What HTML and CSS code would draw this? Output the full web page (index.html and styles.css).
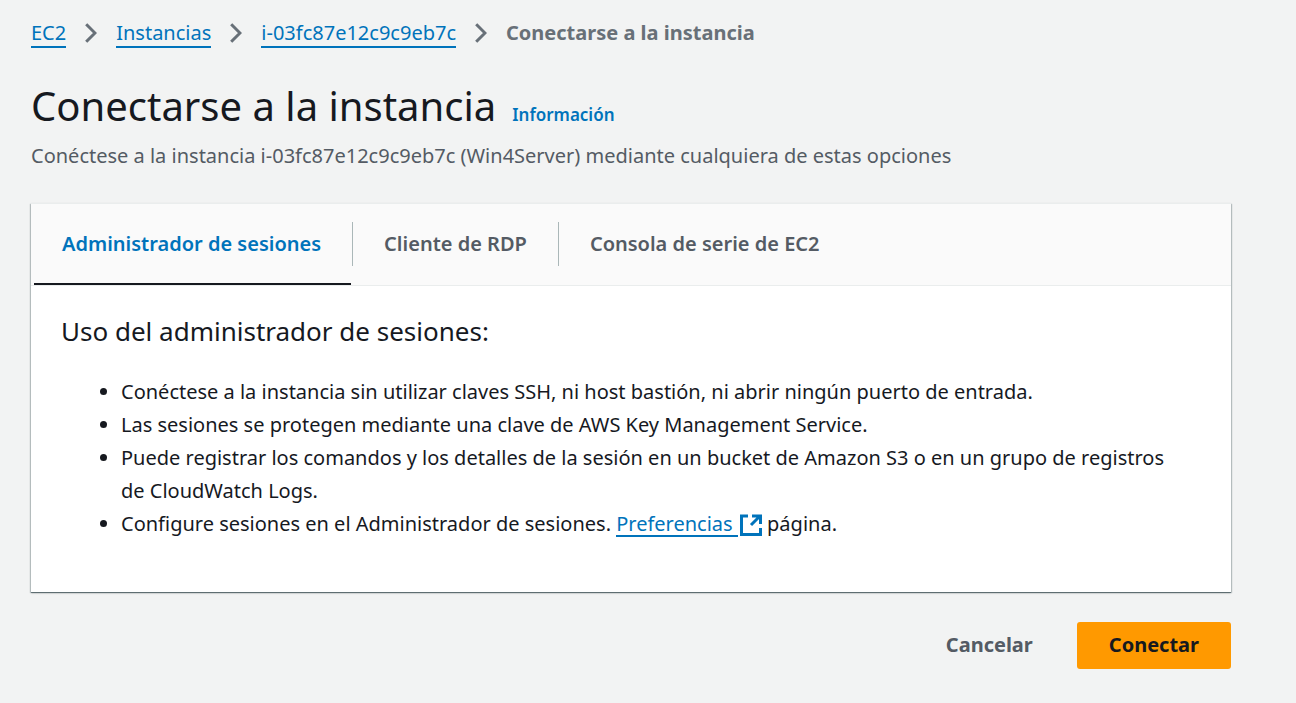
FILE: index.html
```html
<!DOCTYPE html>
<html lang="es">
<head>
<meta charset="utf-8">
<meta name="viewport" content="width=device-width, initial-scale=1">
<title>Conectarse a la instancia | EC2</title>
<link rel="stylesheet" href="styles.css">
</head>
<body>
<main class="page">
  <nav class="breadcrumb" aria-label="Ruta de navegación">
    <a class="link" href="#ec2">EC2</a>
    <svg class="chevron" viewBox="0 0 12 20" aria-hidden="true"><path d="M1.2 1.2 10 10l-8.800 8.800"/></svg>
    <a class="link" href="#instancias">Instancias</a>
    <svg class="chevron" viewBox="0 0 12 20" aria-hidden="true"><path d="M1.2 1.2 10 10l-8.800 8.800"/></svg>
    <a class="link" href="#instancia">i-03fc87e12c9c9eb7c</a>
    <svg class="chevron" viewBox="0 0 12 20" aria-hidden="true"><path d="M1.2 1.2 10 10l-8.800 8.800"/></svg>
    <span class="current" aria-current="page">Conectarse a la instancia</span>
  </nav>

  <header class="header">
    <div class="heading">
      <h1 class="title">Conectarse a la instancia</h1>
      <a class="info" href="#info">Información</a>
    </div>
    <p class="description">Conéctese a la instancia i-03fc87e12c9c9eb7c (Win4Server) mediante cualquiera de estas opciones</p>
  </header>

  <section class="panel">
    <div class="tabs" role="tablist">
      <button class="tab tab-active" type="button" role="tab" aria-selected="true"><span class="tab-label">Administrador de sesiones</span></button>
      <button class="tab" type="button" role="tab" aria-selected="false"><span class="tab-label">Cliente de RDP</span></button>
      <button class="tab" type="button" role="tab" aria-selected="false"><span class="tab-label">Consola de serie de EC2</span></button>
    </div>
    <div class="content" role="tabpanel">
      <h2 class="subtitle">Uso del administrador de sesiones:</h2>
      <ul class="list">
        <li>Conéctese a la instancia sin utilizar claves SSH, ni host bastión, ni abrir ningún puerto de entrada.</li>
        <li>Las sesiones se protegen mediante una clave de AWS Key Management Service.</li>
        <li>Puede registrar los comandos y los detalles de la sesión en un bucket de Amazon S3 o en un grupo de registros de CloudWatch Logs.</li>
        <li>Configure sesiones en el Administrador de sesiones. <a class="external" href="#preferencias"><span class="link">Preferencias&nbsp;</span><svg class="external-icon" viewBox="0 0 22 22" aria-hidden="true"><path d="M8 2H1.500v18.500h19V14M12 2h8.500v8M20 2l-9 9"/></svg></a> página.</li>
      </ul>
    </div>
  </section>

  <div class="actions">
    <button class="button" type="button">Cancelar</button>
    <button class="button button-primary" type="button">Conectar</button>
  </div>
</main>
</body>
</html>
```

FILE: styles.css
```css
* { box-sizing: border-box; }

body {
  margin: 0;
  background: #f2f3f3;
  color: #16191f;
  font-family: "Noto Sans", "Open Sans", sans-serif;
  font-size: 20px;
  line-height: 33px;
}

.page { padding: 16px 65px 32px 31px; }

.breadcrumb {
  display: flex;
  flex-wrap: wrap;
  align-items: center;
  column-gap: 19px;
}

.link {
  color: #0073bb;
  text-decoration: none;
  box-shadow: inset 0 -2px #0073bb;
}

.breadcrumb .link { line-height: 30px; }

.chevron {
  width: 12px;
  height: 20px;
  fill: none;
  stroke: #687078;
  stroke-width: 3;
}

.current { color: #687078; font-weight: 700; }

.header { padding-top: 32px; }

.heading {
  display: flex;
  align-items: baseline;
  gap: 16px;
}

.title {
  margin: 0;
  font-size: 40px;
  font-weight: 400;
  line-height: 50px;
}

.info {
  color: #0073bb;
  font-size: 17px;
  font-weight: 600;
  text-decoration: none;
}

.description {
  margin: 8px 0 0;
  color: #545b64;
}

.panel {
  margin-top: 31px;
  background: #fff;
  box-shadow: 0 1px 2px #00000040, 1px 1px 1px #687e8455, -1px 1px 1px #687e8455, 0 1px #7b8c91;
}

.tabs {
  display: flex;
  background: #fafafa;
  border-top: 1px solid #eaeded;
  border-bottom: 1px solid #eaeded;
}

.tab {
  position: relative;
  padding: 18px 0 19px;
  border: 0;
  background: none;
  color: #545b64;
  font: inherit;
  font-weight: 600;
  cursor: pointer;
}

.tab-label {
  display: block;
  padding: 5px 31px 6px;
  border-right: 1px solid #aab7b8;
}

.tab:last-child .tab-label { border-right: 0; }

.tab-active { color: #0073bb; }

.tab-active::after {
  content: "";
  position: absolute;
  right: 2px;
  bottom: 0;
  left: 3px;
  height: 2px;
  background: #16191f;
}

.content { padding: 27px 30px 52px; }

.subtitle {
  margin: 0;
  font-size: 26px;
  font-weight: 400;
  line-height: 36px;
}

.list { margin: 26px 0 0; padding: 0 20px 0 60px; }

.external { text-decoration: none; white-space: nowrap; }

.external-icon {
  width: 22px;
  height: 22px;
  margin-left: 2px;
  vertical-align: -5px;
  fill: none;
  stroke: #0073bb;
  stroke-width: 3;
}

.actions {
  display: flex;
  justify-content: flex-end;
  gap: 12px;
  margin-top: 30px;
}

.button {
  padding: 6px 32px 8px;
  border: 0;
  border-radius: 3px;
  background: transparent;
  color: #545b64;
  font: inherit;
  font-weight: 700;
  cursor: pointer;
}

.button-primary { background: #ff9900; color: #16191f; }
```
